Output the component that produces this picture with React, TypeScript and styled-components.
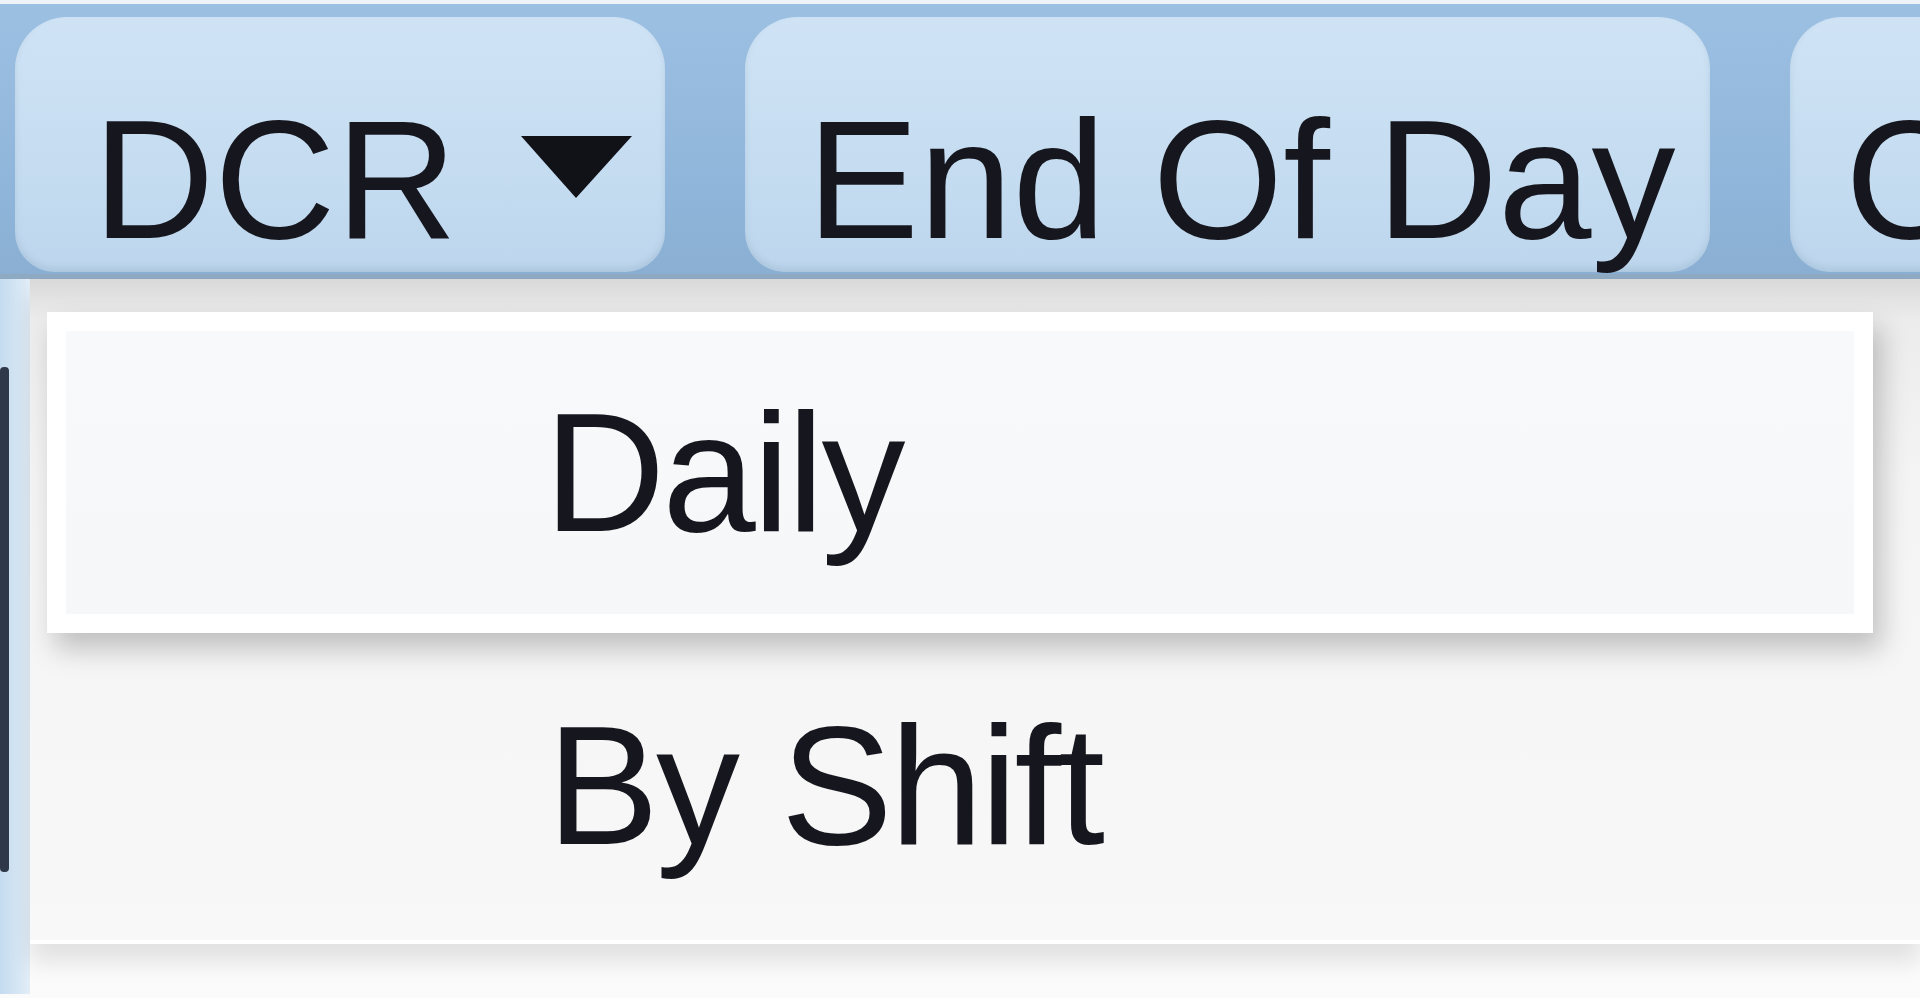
import styled, { createGlobalStyle } from "styled-components";

const GlobalStyle = createGlobalStyle`
  html, body {
    margin: 0;
    padding: 0;
    background: #f5f5f5;
  }
  * {
    box-sizing: border-box;
  }
`;

const Page = styled.div`
  width: 1920px;
  height: 998px;
  overflow: hidden;
  background: linear-gradient(#f2f2f2, #f7f7f7 60%, #fbfbfb);
  font-family: "Liberation Sans", Arial, sans-serif;
  color: #16161e;
`;

const Ribbon = styled.div`
  height: 279px;
  display: flex;
  gap: 80px;
  align-items: flex-start;
  padding: 13px 0 0 15px;
  border-top: 4px solid #eef3f8;
  background: linear-gradient(#9cc0e2, #8fb5da 70%, #8aafd3);
  border-bottom: 5px solid #8ea9c2;
  overflow: hidden;
`;

const Tab = styled.div<{ $width: number; $pad: number }>`
  flex: 0 0 auto;
  width: ${(p) => p.$width}px;
  height: 255px;
  display: flex;
  align-items: flex-start;
  gap: 64px;
  padding: 79px 0 0 ${(p) => p.$pad}px;
  border-radius: 52px 52px 40px 40px;
  background: linear-gradient(#cfe3f5, #c6ddf1 55%, #bdd6ed);
  box-shadow: inset 0 -4px 6px rgba(120, 150, 180, 0.25);
  font-size: 168px;
  line-height: 1;
  white-space: nowrap;
`;

const Caret = styled.svg`
  width: 111px;
  height: 62px;
  margin-top: 40px;
  flex: 0 0 auto;
`;

const Body = styled.div`
  display: flex;
  height: 715px;
`;

const SideStrip = styled.div`
  width: 30px;
  flex: 0 0 auto;
  background: linear-gradient(90deg, #c4dbef, #e2edf7);
  padding-top: 88px;
`;

const DarkEdge = styled.div`
  width: 9px;
  height: 505px;
  border-radius: 4px;
  background: #1e2636;
  opacity: 0.9;
`;

const Menu = styled.div`
  flex: 1;
  height: 665px;
  padding: 33px 0 0 17px;
  background: linear-gradient(#d9d9d9, #ececec 40px, #f4f4f4 200px, #f8f8f8);
  border-bottom: 4px solid #ffffff;
  box-shadow: 0 18px 22px rgba(0, 0, 0, 0.1);
`;

const MenuItem = styled.div<{ $active?: boolean }>`
  width: 1826px;
  height: ${(p) => (p.$active ? 321 : 305)}px;
  display: flex;
  align-items: center;
  padding-left: ${(p) => (p.$active ? 478 : 500)}px;
  font-size: 168px;
  line-height: 1;
  letter-spacing: -3px;
  border: ${(p) => (p.$active ? "19px solid #ffffff" : "none")};
  background: ${(p) =>
    p.$active ? "linear-gradient(#f8f9fa, #f7f8fa 50%, #f6f7f8)" : "transparent"};
  box-shadow: ${(p) =>
    p.$active ? "8px 16px 26px rgba(0, 0, 0, 0.22)" : "none"};
`;

export default function App() {
  return (
    <Page>
      <GlobalStyle />
      <Ribbon>
        <Tab $width={650} $pad={78}>
          <span>DCR</span>
          <Caret viewBox="0 0 111 62">
            <polygon points="0,0 111,0 55,62" fill="#111118" />
          </Caret>
        </Tab>
        <Tab $width={965} $pad={62}>
          End Of Day
        </Tab>
        <Tab $width={500} $pad={55}>
          Cashier
        </Tab>
      </Ribbon>
      <Body>
        <SideStrip>
          <DarkEdge />
        </SideStrip>
        <Menu>
          <MenuItem $active>Daily</MenuItem>
          <MenuItem>By Shift</MenuItem>
        </Menu>
      </Body>
    </Page>
  );
}
